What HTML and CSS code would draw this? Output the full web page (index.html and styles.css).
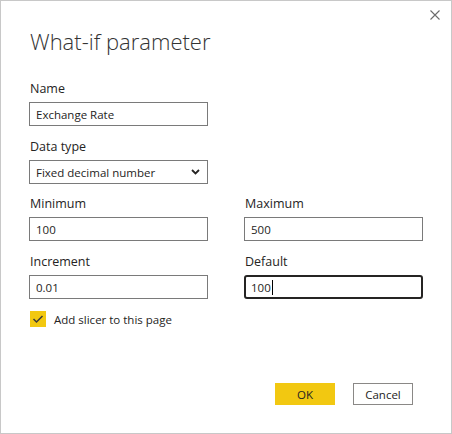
FILE: index.html
```html
<!DOCTYPE html>
<html lang="en">
<head>
    <meta charset="UTF-8">
    <meta name="viewport" content="width=device-width, initial-scale=1.0">
    <title>What-if parameter</title>
    <link rel="stylesheet" href="styles.css">
</head>
<body>
    <div class="dialog">
        <button class="close" aria-label="Close">
            <svg width="10" height="10" viewBox="0 0 10 10">
                <path d="M0.5 0.5 L9.5 9.5 M9.5 0.5 L0.5 9.5" stroke="#6b6b6b" stroke-width="1.1" fill="none"/>
            </svg>
        </button>

        <h1 class="title">What-if parameter</h1>

        <div class="field">
            <label for="name">Name</label>
            <input type="text" id="name" value="Exchange Rate">
        </div>

        <div class="field">
            <label for="datatype">Data type</label>
            <div class="select">
                <span>Fixed decimal number</span>
                <svg width="9" height="6" viewBox="0 0 9 6">
                    <path d="M1 1 L4.5 4.5 L8 1" stroke="#252423" stroke-width="1.8" fill="none"/>
                </svg>
            </div>
        </div>

        <div class="grid">
            <div class="field">
                <label for="min">Minimum</label>
                <input type="text" id="min" value="100">
            </div>
            <div class="field">
                <label for="max">Maximum</label>
                <input type="text" id="max" value="500">
            </div>
            <div class="field">
                <label for="inc">Increment</label>
                <input type="text" id="inc" value="0.01">
            </div>
            <div class="field">
                <label>Default</label>
                <div class="input focused">100<span class="caret"></span></div>
            </div>
        </div>

        <div class="check">
            <span class="box">
                <svg width="12" height="10" viewBox="0 0 12 10">
                    <path d="M1.5 5 L4.5 8 L10.5 2" stroke="#3b3a39" stroke-width="1.5" fill="none"/>
                </svg>
            </span>
            Add slicer to this page
        </div>

        <div class="footer">
            <button class="btn primary">OK</button>
            <button class="btn">Cancel</button>
        </div>
    </div>
</body>
</html>
```

FILE: styles.css
```css
* {
    box-sizing: border-box;
}
body {
    margin: 0;
    background: #fff;
    font-family: 'Open Sans', 'Noto Sans', sans-serif;
    color: #252423;
}
.dialog {
    position: relative;
    width: 452px;
    height: 434px;
    border: 1px solid #c8c8c8;
    padding: 25px 28px 28px 28px;
    display: flex;
    flex-direction: column;
}
.close {
    position: absolute;
    top: 9px;
    right: 11px;
    width: 10px;
    height: 10px;
    padding: 0;
    border: none;
    background: none;
    display: flex;
}
.title {
    margin: 0 0 24px 1px;
    font-size: 22px;
    font-weight: 300;
    line-height: 30px;
    color: #333;
}
.field {
    display: flex;
    flex-direction: column;
    width: 179px;
    margin-bottom: 11px;
}
.field:first-of-type {
    margin-bottom: 12px;
}
.field label {
    font-size: 12.5px;
    line-height: 18px;
    margin-bottom: 4px;
    padding-left: 1px;
}
.field input,
.input,
.select {
    height: 24px;
    border: 1px solid #7a7a7a;
    border-radius: 0;
    font-family: inherit;
    font-size: 11.5px;
    color: #252423;
    padding: 0 6px;
    outline: none;
    display: flex;
    align-items: center;
}
.select {
    justify-content: space-between;
    padding-right: 7px;
}
.input.focused {
    border: 2px solid #252423;
    border-radius: 3px;
    padding-left: 5px;
}
.caret {
    display: inline-block;
    width: 1px;
    height: 15px;
    background: #000;
    margin-left: 1px;
}
.grid {
    display: grid;
    grid-template-columns: 179px 179px;
    column-gap: 36px;
}
.check {
    display: flex;
    align-items: center;
    font-size: 11.5px;
    margin-top: 1px;
    padding-left: 1px;
}
.check .box {
    width: 16px;
    height: 16px;
    background: #f2c811;
    display: flex;
    align-items: center;
    justify-content: center;
    margin-right: 8px;
}
.footer {
    margin-top: auto;
    display: flex;
    justify-content: flex-end;
    gap: 18px;
    padding-right: 10px;
}
.btn {
    width: 60px;
    height: 22px;
    font-family: inherit;
    font-size: 11.5px;
    color: #252423;
    background: #fff;
    border: 1px solid #8a8886;
    padding: 0;
}
.btn.primary {
    background: #f2c811;
    border-color: #f2c811;
}
```
